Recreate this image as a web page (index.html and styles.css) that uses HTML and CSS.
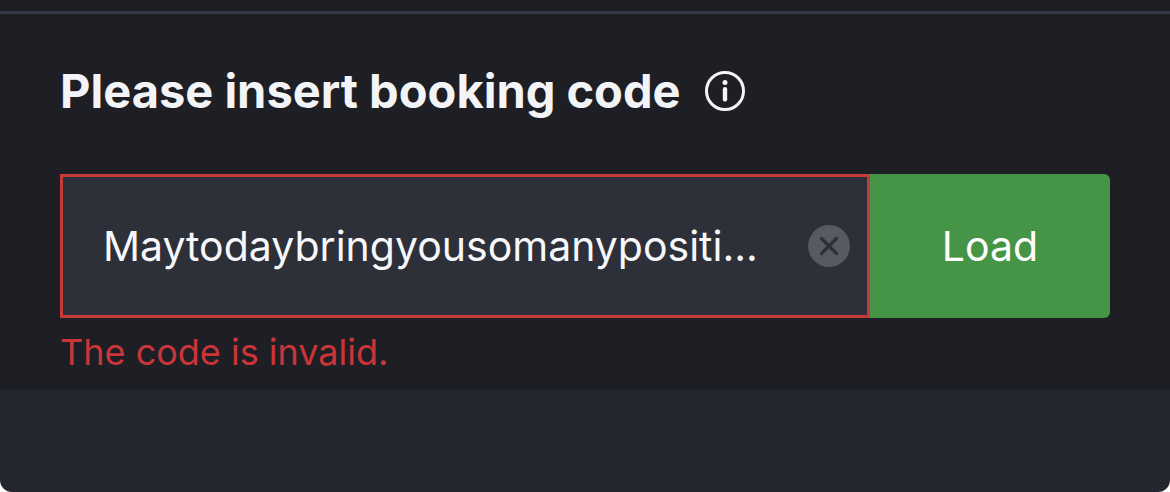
FILE: index.html
```html
<!DOCTYPE html>
<html lang="en">
<head>
<meta charset="utf-8">
<meta name="viewport" content="width=device-width, initial-scale=1">
<title>Booking code</title>
<link rel="stylesheet" href="styles.css">
</head>
<body>
<main class="sheet">
  <form class="booking">
    <div class="heading">
      <label class="title" for="code">Please insert booking code</label>
      <button class="info" type="button" aria-label="About booking codes">
        <svg viewBox="0 0 40 40" width="40" height="40" aria-hidden="true">
          <circle cx="20" cy="20" r="18.5" fill="none" stroke="currentColor" stroke-width="3"/>
          <circle cx="20" cy="11.5" r="2.5" fill="currentColor"/>
          <path d="M20 18.2V28.4" stroke="currentColor" stroke-width="4.4" stroke-linecap="round"/>
        </svg>
      </button>
    </div>
    <div class="row">
      <div class="field">
        <input class="code" id="code" type="text" value="Maytodaybringyousomanypositi..." aria-invalid="true" aria-describedby="code-error" spellcheck="false">
        <button class="clear" type="button" aria-label="Clear">
          <svg viewBox="0 0 42 42" width="42" height="42" aria-hidden="true">
            <circle cx="21" cy="21" r="21" fill="#575a63"/>
            <path d="M13.5 13.5L28.5 28.5M28.5 13.5L13.5 28.5" stroke="#2d3039" stroke-width="3.2" stroke-linecap="round"/>
          </svg>
        </button>
      </div>
      <button class="load" type="button">Load</button>
    </div>
    <p class="error" id="code-error">The code is invalid.</p>
  </form>
</main>
</body>
</html>
```
FILE: styles.css
```css
* {
  box-sizing: border-box;
}

body {
  margin: 0;
  background: #fff;
  font-family: Inter, "Liberation Sans", sans-serif;
}

button {
  margin: 0;
  padding: 0;
  border: 0;
  background: none;
  font: inherit;
  cursor: pointer;
}

svg {
  display: block;
}

.sheet {
  display: flex;
  flex-direction: column;
  min-height: 100vh;
  padding-top: 11px;
  border-radius: 0 0 12px 12px;
  background: linear-gradient(#1e1e24 11px, #23262e 11px);
  overflow: hidden;
}

.booking {
  padding: 47px 60px 16px;
  border-top: 3px solid #353945;
  background: #1e1f24;
}

.heading {
  display: flex;
  align-items: center;
  gap: 24px;
  margin-bottom: 53px;
}

.title {
  color: #f3f4f7;
  font-size: 47px;
  font-weight: 700;
  line-height: 60px;
}

.info {
  color: #f3f4f7;
}

.row {
  display: flex;
  height: 144px;
}

.field {
  display: flex;
  flex: 1;
  align-items: center;
  min-width: 0;
  padding: 0 17px 0 40px;
  border: 3px solid #c73a3a;
  background: #2d3039;
}

.code {
  flex: 1;
  min-width: 0;
  height: 100%;
  padding: 0;
  border: 0;
  outline: 0;
  background: transparent;
  color: #f6f7fa;
  font: inherit;
  font-size: 41px;
}

.clear {
  flex: none;
  margin-left: 16px;
}

.load {
  flex: none;
  width: 240px;
  border-radius: 0 6px 6px 0;
  background: #469546;
  color: #fff;
  font-size: 41px;
}

.error {
  margin: 12px 0 0;
  color: #cb3539;
  font-size: 36px;
  line-height: 44px;
}
```
